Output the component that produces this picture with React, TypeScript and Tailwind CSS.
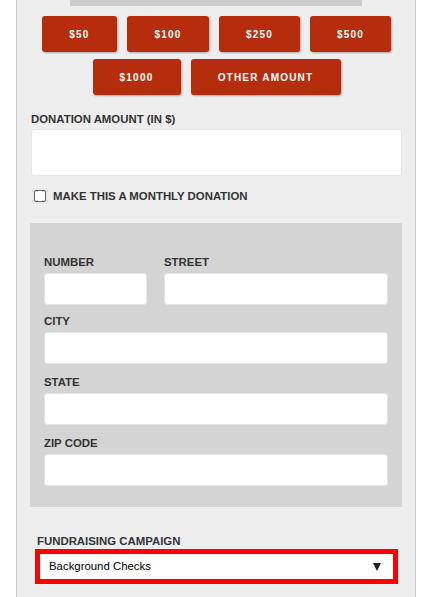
import React from "react";

const font = { fontFamily: '"Liberation Sans", Arial, Helvetica, sans-serif' };

function Btn({ w, children }: { w: string; children: React.ReactNode }) {
  return (
    <button
      className={`${w} h-[36px] rounded-[3px] bg-[#b52d0d] text-white font-bold text-[10px] tracking-[1.2px] shadow-[1px_1px_2px_rgba(0,0,0,0.3)] flex items-center justify-center`}
    >
      {children}
    </button>
  );
}

function Label({ children, className = "" }: { children: React.ReactNode; className?: string }) {
  return (
    <div className={`text-[11.4px] leading-[14px] font-bold text-[#333] ${className}`}>{children}</div>
  );
}

function Input({ className = "" }: { className?: string }) {
  return <div className={`bg-white rounded-[3px] border border-[#e6e6e6] ${className}`} />;
}

export default function App() {
  return (
    <div className="bg-white h-[597px] overflow-hidden" style={font}>
      <div className="ml-[16px] w-[400px] h-full bg-[#eeeeee] border-x border-[#cccccc]">
        <div className="ml-[53px] w-[292px] h-[6px] bg-[#cccccc]" />
        <div className="mt-[10px] flex flex-col items-center gap-[7px]">
          <div className="flex gap-[10px] ml-[1px]">
            <Btn w="w-[75px]">$50</Btn>
            <Btn w="w-[82px]">$100</Btn>
            <Btn w="w-[81px]">$250</Btn>
            <Btn w="w-[81px]">$500</Btn>
          </div>
          <div className="flex gap-[10px] ml-[1px]">
            <Btn w="w-[88px]">$1000</Btn>
            <Btn w="w-[150px]">OTHER AMOUNT</Btn>
          </div>
        </div>
        <div className="ml-[14px] w-[371px]">
          <Label className="mt-[17px]">DONATION AMOUNT (IN $)</Label>
          <Input className="mt-[3px] h-[47px]" />
          <div className="mt-[13px] flex items-center h-[14px] ml-[3px]">
            <div className="w-[12px] h-[12px] rounded-[2px] border border-[#666] bg-white" />
            <Label className="ml-[7px]">MAKE THIS A MONTHLY DONATION</Label>
          </div>
        </div>
        <div className="ml-[13px] w-[372px] mt-[20px] h-[284px] bg-[#d4d4d4] px-[14px] pt-[32px]">
          <div className="flex gap-[17px]">
            <div className="w-[103px]">
              <Label>NUMBER</Label>
              <Input className="mt-[4px] h-[32px]" />
            </div>
            <div className="w-[224px]">
              <Label>STREET</Label>
              <Input className="mt-[4px] h-[32px]" />
            </div>
          </div>
          <Label className="mt-[9px]">CITY</Label>
          <Input className="mt-[4px] h-[32px]" />
          <Label className="mt-[11px]">STATE</Label>
          <Input className="mt-[4px] h-[32px]" />
          <Label className="mt-[11px]">ZIP CODE</Label>
          <Input className="mt-[4px] h-[32px]" />
        </div>
        <Label className="ml-[20px] mt-[27px]">FUNDRAISING CAMPAIGN</Label>
        <div className="ml-[18px] mt-[1px] w-[363px] h-[35px] border-[5px] border-[#ff0000] bg-white flex items-center justify-between pl-[9px] pr-[12px]">
          <span className="text-[11.4px] text-black">Background Checks</span>
          <svg width="8" height="8" viewBox="0 0 8 8">
            <polygon points="0,0 8,0 4,8" fill="#222" />
          </svg>
        </div>
      </div>
    </div>
  );
}
